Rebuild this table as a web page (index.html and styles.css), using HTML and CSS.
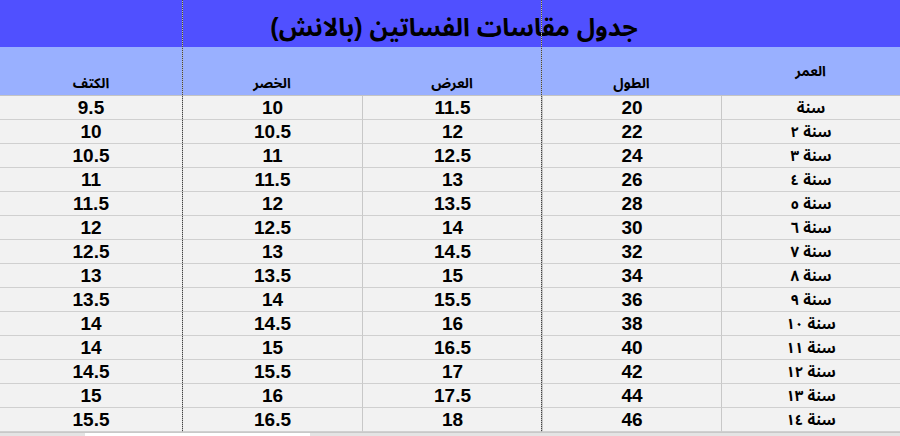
FILE: index.html
```html
<!DOCTYPE html>
<html lang="ar">
<head>
<meta charset="utf-8">
<title>جدول مقاسات الفساتين</title>
<link rel="stylesheet" href="styles.css">
</head>
<body>
<div class="sheet">
  <div class="title" dir="rtl">جدول مقاسات الفساتين (بالانش)</div>
  <table class="sizes">
    <colgroup>
      <col class="c1"><col class="c2"><col class="c3"><col class="c4"><col class="c5">
    </colgroup>
    <thead>
      <tr>
        <th>الكتف</th><th>الخصر</th><th>العرض</th><th>الطول</th><th class="age-h">العمر</th>
      </tr>
    </thead>
    <tbody>
      <tr><td>9.5</td><td>10</td><td>11.5</td><td>20</td><td class="age"><bdi>سنة</bdi></td></tr>
      <tr><td>10</td><td>10.5</td><td>12</td><td>22</td><td class="age"><bdi>٢</bdi> <bdi>سنة</bdi></td></tr>
      <tr><td>10.5</td><td>11</td><td>12.5</td><td>24</td><td class="age"><bdi>٣</bdi> <bdi>سنة</bdi></td></tr>
      <tr><td>11</td><td>11.5</td><td>13</td><td>26</td><td class="age"><bdi>٤</bdi> <bdi>سنة</bdi></td></tr>
      <tr><td>11.5</td><td>12</td><td>13.5</td><td>28</td><td class="age"><bdi>٥</bdi> <bdi>سنة</bdi></td></tr>
      <tr><td>12</td><td>12.5</td><td>14</td><td>30</td><td class="age"><bdi>٦</bdi> <bdi>سنة</bdi></td></tr>
      <tr><td>12.5</td><td>13</td><td>14.5</td><td>32</td><td class="age"><bdi>٧</bdi> <bdi>سنة</bdi></td></tr>
      <tr><td>13</td><td>13.5</td><td>15</td><td>34</td><td class="age"><bdi>٨</bdi> <bdi>سنة</bdi></td></tr>
      <tr><td>13.5</td><td>14</td><td>15.5</td><td>36</td><td class="age"><bdi>٩</bdi> <bdi>سنة</bdi></td></tr>
      <tr><td>14</td><td>14.5</td><td>16</td><td>38</td><td class="age"><bdi>١٠</bdi> <bdi>سنة</bdi></td></tr>
      <tr><td>14</td><td>15</td><td>16.5</td><td>40</td><td class="age"><bdi>١١</bdi> <bdi>سنة</bdi></td></tr>
      <tr><td>14.5</td><td>15.5</td><td>17</td><td>42</td><td class="age"><bdi>١٢</bdi> <bdi>سنة</bdi></td></tr>
      <tr><td>15</td><td>16</td><td>17.5</td><td>44</td><td class="age"><bdi>١٣</bdi> <bdi>سنة</bdi></td></tr>
      <tr><td>15.5</td><td>16.5</td><td>18</td><td>46</td><td class="age"><bdi>١٤</bdi> <bdi>سنة</bdi></td></tr>
    </tbody>
  </table>
  <div class="tabs"></div>
  <div class="pagebreak pb-left"></div>
  <div class="pagebreak pb-right"></div>
</div>
</body>
</html>
```

FILE: styles.css
```css
* { box-sizing: border-box; }

html, body {
  margin: 0;
  padding: 0;
  background: #f2f2f2;
}

body {
  width: 900px;
  height: 436px;
  overflow: hidden;
  font-family: "Liberation Sans", "Noto Sans Arabic", "DejaVu Sans", Arial, sans-serif;
  color: #000;
}

.sheet {
  position: relative;
  width: 900px;
  height: 436px;
}

.title {
  height: 47px;
  background: #5050ff;
  text-align: center;
  font-size: 25px;
  font-weight: bold;
  line-height: 47px;
  padding-top: 4px;
  padding-left: 8px;
}

.sizes {
  width: 900px;
  table-layout: fixed;
  border-collapse: separate;
  border-spacing: 0;
}

.c1 { width: 182px; }
.c2 { width: 180px; }
.c3 { width: 180px; }
.c4 { width: 179px; }
.c5 { width: 179px; }

.sizes th {
  height: 49px;
  background: #99b0ff;
  font-size: 14px;
  font-weight: bold;
  line-height: 18px;
  vertical-align: bottom;
  padding: 0 0 3px;
  border-bottom: 1px solid #c4c4c4;
}

.sizes th.age-h {
  vertical-align: middle;
  padding: 0 0 0;
}

.sizes td {
  height: 24px;
  padding: 0;
  text-align: center;
  font-size: 19px;
  font-weight: bold;
  line-height: 23px;
  border-bottom: 1px solid #d0d0d0;
  border-left: 1px solid #c8c8c8;
  background: #f2f2f2;
}

.sizes td:first-child {
  border-left: none;
}

.sizes td.age {
  font-size: 15px;
}

.tabs {
  height: 4px;
  border-top: 1px solid #c8c8c8;
  background: linear-gradient(to right, #e4e4e4 0 85px, #ffffff 85px 310px, #e4e4e4 310px 900px);
}

.pagebreak {
  position: absolute;
  top: 0;
  width: 1px;
  height: 432px;
  background: repeating-linear-gradient(to bottom, #444 0 1px, #b8b8b8 1px 2px);
}

.pb-left { left: 182px; }
.pb-right { left: 541px; }
```
